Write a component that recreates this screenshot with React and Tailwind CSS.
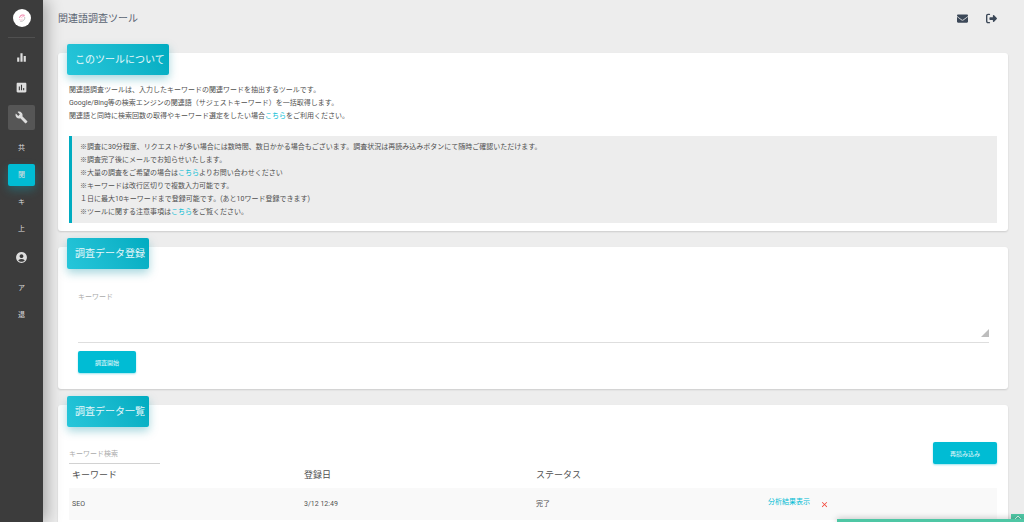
import { useState } from 'react';
import { MdEqualizer, MdAssessment, MdBuild, MdAccountCircle, MdClose } from 'react-icons/md';
import { FaEnvelope } from 'react-icons/fa';
import { FaRightFromBracket } from 'react-icons/fa6';

const toolLinks = [
    { short: '共', label: '共起語調査' },
    { short: '関', label: '関連語調査', active: true },
    { short: 'キ', label: 'キーワード' },
    { short: '上', label: '上位調査' },
];

const accountLinks = [
    { short: 'ア', label: 'アカウント' },
    { short: '退', label: '退会' },
];

const rows = [{ keyword: 'SEO', date: '3/12 12:49', status: '完了' }];

function Logo() {
    return (
        <svg viewBox="0 0 18 18" className="w-[18px] h-[18px]" role="img" aria-label="logo">
            <circle cx="9" cy="9" r="9" fill="#fff" />
            <g fill="none" strokeLinecap="round">
                <path d="M6.6 8.4C6.8 6.5 8.8 5.4 11.2 6.2" stroke="#f0709f" strokeWidth="1" />
                <path d="M8.4 8.4C9.2 7.4 10.4 7.6 11.4 7" stroke="#f8a5c2" strokeWidth="0.8" />
                <path d="M11.8 8.4C12.2 10.6 10.2 12.7 7.6 12.4" stroke="#b5b5b5" strokeWidth="0.8" />
                <path d="M6.2 10.4C6.8 11.4 8.4 11.4 9.4 10.4" stroke="#f8a5c2" strokeWidth="0.6" />
            </g>
        </svg>
    );
}

function IconLink({ icon: Icon, label, active }) {
    return (
        <a
            href="#"
            aria-label={label}
            className={`flex items-center justify-center h-[25px] rounded-xs text-[#dedede] ${active ? 'bg-[#565656]' : ''}`}
        >
            <Icon size={13} />
        </a>
    );
}

function SubLinks({ links }) {
    return (
        <ul className="flex flex-col gap-[5px] mt-0.5">
            {links.map((link) => (
                <li key={link.short}>
                    <a
                        href="#"
                        title={link.label}
                        className={`flex items-center justify-center h-[22px] rounded-xs text-[7px] text-[#dedede] ${link.active ? 'bg-[#00bcd4] shadow-[0_4px_10px_rgba(0,188,212,0.3)]' : ''}`}
                    >
                        {link.short}
                    </a>
                </li>
            ))}
        </ul>
    );
}

function Sidebar() {
    return (
        <aside className="relative z-10 w-[43px] shrink-0 px-2 bg-[#3c3c3c] shadow-[4px_0_16px_rgba(0,0,0,0.3)]">
            <a href="#" className="flex justify-center pt-[9px] pb-[10px] border-b border-[#505050]">
                <Logo />
            </a>
            <nav className="flex flex-col gap-[5px] mt-[7px]">
                <IconLink icon={MdEqualizer} label="順位" />
                <IconLink icon={MdAssessment} label="分析" />
                <IconLink icon={MdBuild} label="ツール" active />
                <SubLinks links={toolLinks} />
                <IconLink icon={MdAccountCircle} label="アカウント" />
                <SubLinks links={accountLinks} />
            </nav>
        </aside>
    );
}

function Card({ title, children }) {
    return (
        <section className="bg-white rounded-[3px] shadow-[0_1px_2px_rgba(0,0,0,0.14)] px-[11px]">
            <div className="flex">
                <h2 className="-mt-[9px] -ml-0.5 h-[31px] pl-2 pr-1 flex items-center rounded-xs text-[10px] text-white/90 bg-linear-60 from-[#26c6da] to-[#00acc1] shadow-[0_4px_10px_rgba(0,140,160,0.35)]">
                    {title}
                </h2>
            </div>
            {children}
        </section>
    );
}

function TextLink({ children }) {
    return <a href="#" className="text-[#00bcd4]">{children}</a>;
}

function Button({ children, ...props }) {
    return (
        <button
            type="button"
            className="h-[22px] px-[17px] rounded-xs bg-[#00bcd4] text-white/90 text-[6px] shadow-[0_1px_2px_rgba(0,188,212,0.4)] cursor-pointer"
            {...props}
        >
            {children}
        </button>
    );
}

export default function App() {
    const [keywords, setKeywords] = useState('');
    const [search, setSearch] = useState('');
    const [data, setData] = useState(rows);

    const visible = data.filter((row) => row.keyword.toLowerCase().includes(search.toLowerCase()));

    return (
        <div className="flex h-screen overflow-hidden bg-[#ededed] text-[#505050] text-[7px] leading-[13px] font-['Roboto','Noto_Sans_CJK_JP',sans-serif]">
            <Sidebar />
            <main className="flex-1 min-w-0 pl-[15px] pr-4">
                <header className="flex items-center justify-between h-9 pr-[11px] mb-[17px] text-[#3c4858]">
                    <h1 className="text-[10px] text-[#5a6472]">関連語調査ツール</h1>
                    <div className="flex gap-[18px]">
                        <a href="#" aria-label="お問い合わせ"><FaEnvelope size={11} /></a>
                        <a href="#" aria-label="ログアウト"><FaRightFromBracket size={11} /></a>
                    </div>
                </header>

                <div className="flex flex-col gap-4">
                    <Card title="このツールについて">
                        <div className="pt-[9px] pb-2">
                            <p>関連語調査ツールは、入力したキーワードの関連ワードを抽出するツールです。</p>
                            <p>Google/Bing等の検索エンジンの関連語（サジェストキーワード）を一括取得します。</p>
                            <p>関連語と同時に検索回数の取得やキーワード選定をしたい場合<TextLink>こちら</TextLink>をご利用ください。</p>
                            <div className="mt-[13px] pt-[5px] pb-1 pl-2 border-l-3 border-[#00acc1] bg-[#ededed]">
                                <p>※調査に30分程度、リクエストが多い場合には数時間、数日かかる場合もございます。調査状況は再読み込みボタンにて随時ご確認いただけます。</p>
                                <p>※調査完了後にメールでお知らせいたします。</p>
                                <p>※大量の調査をご希望の場合は<TextLink>こちら</TextLink>よりお問い合わせください</p>
                                <p>※キーワードは改行区切りで複数入力可能です。</p>
                                <p>１日に最大10キーワードまで登録可能です。(あと10ワード登録できます)</p>
                                <p>※ツールに関する注意事項は<TextLink>こちら</TextLink>をご覧ください。</p>
                            </div>
                        </div>
                    </Card>

                    <Card title="調査データ登録">
                        <form className="pl-[9px] pr-2 pt-[22px] pb-4">
                            <div className="relative">
                                <textarea
                                    aria-label="キーワード"
                                    placeholder="キーワード"
                                    value={keywords}
                                    onChange={(e) => setKeywords(e.target.value)}
                                    className="block w-full h-[52px] resize-none outline-none border-b border-[#dedede] placeholder:text-[#aaaaaa]"
                                />
                                <svg viewBox="0 0 8 8" className="absolute right-0 bottom-[6px] w-2 h-2 pointer-events-none" aria-hidden="true">
                                    <path d="M8 0V8H0Z" fill="#bdbdbd" />
                                </svg>
                            </div>
                            <div className="flex mt-2">
                                <Button>調査開始</Button>
                            </div>
                        </form>
                    </Card>

                    <Card title="調査データ一覧">
                        <div className="flex justify-between pt-[15px]">
                            <input
                                type="text"
                                aria-label="キーワード検索"
                                placeholder="キーワード検索"
                                value={search}
                                onChange={(e) => setSearch(e.target.value)}
                                className="w-[91px] h-[22px] pt-0.5 outline-none border-b border-[#d2d2d2] placeholder:text-[#aaaaaa]"
                            />
                            <Button>再読み込み</Button>
                        </div>
                        <div className="pb-4">
                            <table className="w-full table-fixed text-left">
                                <thead>
                                    <tr className="h-6 text-[9px]">
                                        <th className="px-[3px] pb-0.5 font-normal">キーワード</th>
                                        <th className="px-[3px] pb-0.5 font-normal">登録日</th>
                                        <th className="px-[3px] pb-0.5 font-normal">ステータス</th>
                                        <th aria-label="操作"></th>
                                    </tr>
                                </thead>
                                <tbody>
                                    {visible.map((row) => (
                                        <tr key={row.keyword} className="h-8 bg-[#f9f9f9]">
                                            <td className="px-[3px]">{row.keyword}</td>
                                            <td className="px-[3px]">{row.date}</td>
                                            <td className="px-[3px]">{row.status}</td>
                                            <td className="px-[3px] pb-1">
                                                <div className="flex gap-[10px]">
                                                    <TextLink>分析結果表示</TextLink>
                                                    <button
                                                        type="button"
                                                        aria-label="削除"
                                                        onClick={() => setData(data.filter((item) => item !== row))}
                                                        className="pt-1 text-[#f44336] cursor-pointer"
                                                    >
                                                        <MdClose size={9} />
                                                    </button>
                                                </div>
                                            </td>
                                        </tr>
                                    ))}
                                </tbody>
                            </table>
                        </div>
                    </Card>
                </div>
            </main>

            <div className="fixed right-0 bottom-0 z-20 flex flex-col items-end w-[187px]">
                <button type="button" aria-label="開く" className="flex justify-center w-[13px] h-[5px] overflow-hidden bg-[#4fc7a5]">
                    <svg viewBox="0 0 8 5" className="w-2 h-[5px]" aria-hidden="true">
                        <path d="M1 5L4 2L7 5" fill="none" stroke="#d5f2e9" />
                    </svg>
                </button>
                <div className="w-full h-[3px] bg-[#4fc7a5] shadow-[0_0_6px_rgba(0,0,0,0.35)]"></div>
            </div>
        </div>
    );
}
